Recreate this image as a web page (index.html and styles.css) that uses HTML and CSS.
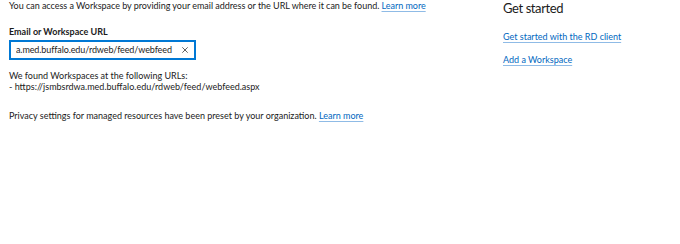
FILE: index.html
```html
<!DOCTYPE html>
<html>
<head>
<meta charset="utf-8">
<link rel="stylesheet" href="styles.css">
</head>
<body>
<div class="page">
  <div class="main">
    <p class="intro">You can access a Workspace by providing your email address or the URL where it can be found. <a href="#" class="link">Learn more</a></p>
    <label class="label">Email or Workspace URL</label>
    <div class="input">
      <span class="value">a.med.buffalo.edu/rdweb/feed/webfeed</span>
      <svg class="clear" width="6" height="6" viewBox="0 0 6 6"><path d="M0.3 0.3 L5.7 5.7 M5.7 0.3 L0.3 5.7" stroke="#3a3a3a" stroke-width="0.8" fill="none"/></svg>
    </div>
    <p class="found">We found Workspaces at the following URLs:<br>- https://jsmbsrdwa.med.buffalo.edu/rdweb/feed/webfeed.aspx</p>
    <p class="privacy">Privacy settings for managed resources have been preset by your organization. <a href="#" class="link">Learn more</a></p>
  </div>
  <div class="side">
    <h2 class="title">Get started</h2>
    <a href="#" class="link side-link">Get started with the RD client</a>
    <a href="#" class="link side-link second">Add a Workspace</a>
  </div>
</div>
</body>
</html>
```
FILE: styles.css
```css
html, body {
  margin: 0;
  padding: 0;
  background: #ffffff;
}
body {
  font-family: Lato, "Open Sans", sans-serif;
  font-size: 9px;
  color: #1b1b1b;
  width: 680px;
  height: 244px;
  overflow: hidden;
}
.page {
  display: flex;
  padding-left: 9px;
}
.main {
  width: 494px;
  flex: none;
  display: flex;
  flex-direction: column;
  align-items: flex-start;
}
p { margin: 0; }
.intro {
  line-height: 12px;
  white-space: nowrap;
  letter-spacing: -0.03px;
}
.link {
  color: #0067c0;
  text-decoration: underline;
  text-decoration-color: #8fbbe6;
  text-underline-offset: 2px;
}
.label {
  display: block;
  margin-top: 14px;
  font-weight: 700;
  line-height: 12px;
}
.input {
  margin-top: 2px;
  box-sizing: border-box;
  width: 187px;
  height: 20px;
  border: 2px solid #0078d4;
  display: flex;
  align-items: center;
  padding: 0 6px 0 5px;
  line-height: 12px;
}
.value {
  flex: 1;
  white-space: nowrap;
  overflow: hidden;
  letter-spacing: -0.1px;
}
.clear { flex: none; }
.found {
  margin-top: 10px;
  line-height: 11px;
  white-space: nowrap;
}
.privacy {
  margin-top: 18px;
  line-height: 12px;
  white-space: nowrap;
}
.side {
  display: flex;
  flex-direction: column;
  align-items: flex-start;
}
.title {
  margin: 0;
  font-size: 13px;
  letter-spacing: -0.4px;
  font-weight: 400;
  line-height: 16px;
  color: #1b1b1b;
}
.side-link {
  margin-top: 15px;
  line-height: 12px;
}
.side-link.second {
  margin-top: 11px;
}
```
